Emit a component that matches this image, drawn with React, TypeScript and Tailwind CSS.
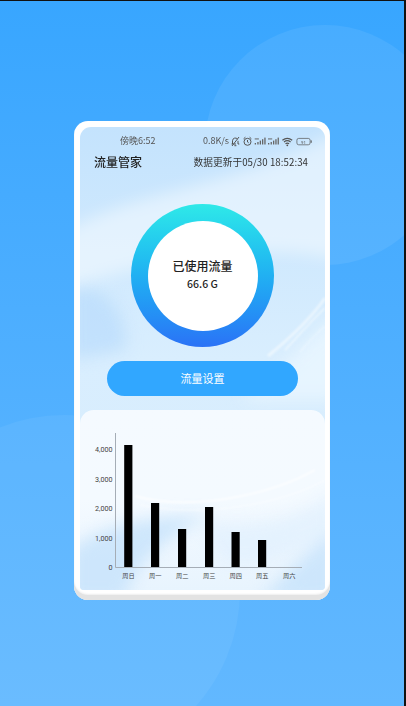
const bars = [
  { x: 124.2, top: 445, label: '周日' },
  { x: 151, top: 503, label: '周一' },
  { x: 178, top: 529, label: '周二' },
  { x: 205, top: 507, label: '周三' },
  { x: 231.5, top: 532, label: '周四' },
  { x: 258, top: 540, label: '周五' },
  { x: 285, top: 567, label: '周六' },
];

const ticks = [
  { y: 567, label: '0' },
  { y: 538, label: '1,000' },
  { y: 508, label: '2,000' },
  { y: 479, label: '3,000' },
  { y: 449, label: '4,000' },
];

const cjk = { fontFamily: "'Noto Sans CJK SC', sans-serif" };

function Signal({ x }: { x: number }) {
  return (
    <g fill="#666" stroke="none">
      <rect x={x} y="2.2" width="4.2" height="1.4" opacity="0.7" />
      <rect x={x} y="7" width="1.3" height="1.5" />
      <rect x={x + 2.6} y="6" width="1.3" height="2.5" />
      <rect x={x + 5} y="4.6" width="1.3" height="3.9" />
      <rect x={x + 7.3} y="3.2" width="1.3" height="5.3" />
      <rect x={x + 9.6} y="1.6" width="1.3" height="6.9" />
    </g>
  );
}

function StatusIcons() {
  return (
    <svg width="84" height="11" viewBox="0 0 84 11" fill="none" stroke="#555" strokeWidth="1">
      {/* bell off */}
      <path d="M2.5 8V4.8a2.8 2.8 0 0 1 5-1.7M8 4.8V8h1.3M1.5 8H6M4.4 9.7h2M2 10l7-9" />
      {/* alarm */}
      <circle cx="17.5" cy="5.8" r="3.5" />
      <path d="M17.5 4v2l1.2.8M13.6 2.8l1.8-1.6M21.4 2.8l-1.8-1.6" />
      <Signal x={24.7} />
      <Signal x={38} />
      {/* wifi */}
      <path d="M52.4 4.2a8 8 0 0 1 9.8 0M54 6a5.4 5.4 0 0 1 6.6 0M55.5 7.7a3 3 0 0 1 3.6 0" strokeWidth="1.2" />
      <circle cx="57.3" cy="9.3" r="0.9" fill="#555" stroke="none" />
      {/* battery */}
      <rect x="66.9" y="2.4" width="13.2" height="6.4" rx="1.8" strokeWidth="0.7" />
      <text x="73.4" y="7.5" textAnchor="middle" fontSize="4.4" fill="#555" stroke="none" fontFamily="Roboto, sans-serif">
        91
      </text>
      <path d="M81.2 4.4v2.4" strokeWidth="1" />
    </svg>
  );
}

function Chart() {
  return (
    <svg className="absolute bottom-0 left-0" width="245" height="180" viewBox="80 410 245 180">
      <path d="M115.5 433V567.5H302" fill="none" stroke="#a5adb6" strokeWidth="1" />
      {bars.map((b) => (
        <g key={b.label}>
          <rect x={b.x} y={b.top} width="8.2" height={567 - b.top} fill="#000" />
          <text x={b.x + 4.2} y="577.5" textAnchor="middle" fontSize="6.2" fill="#444" fontFamily="'Noto Sans CJK SC', sans-serif">
            {b.label}
          </text>
        </g>
      ))}
      {ticks.map((t) => (
        <text key={t.label} x="112.5" y={t.y + 2.5} textAnchor="end" fontSize="7.2" fill="#444" fontFamily="Roboto, sans-serif">
          {t.label}
        </text>
      ))}
    </svg>
  );
}

export default function App() {
  return (
    <div className="relative h-[706px] w-[406px] overflow-hidden bg-[#111] pt-px pr-[2px]">
      <div className="relative h-[705px] w-[404px] overflow-hidden bg-gradient-to-b from-[#38a6ff] to-[#62b8ff] pt-[120px] pl-[74px]">
        <div className="absolute top-[24px] left-[205px] h-[240px] w-[240px] rounded-full bg-white/[0.07]" />
        <div className="absolute top-[414px] left-[-110px] h-[350px] w-[350px] rounded-full bg-white/[0.05]" />

        <div className="relative h-[479px] w-[256px] overflow-hidden rounded-[14px] bg-white pt-[6px] pr-[5px] pl-[6px] shadow-[inset_0_-5px_0_#e3e3e3,inset_0_-6px_2px_#eee]">
          <div className="relative flex h-[463px] flex-col overflow-hidden rounded-t-[11px] rounded-b-[4px] bg-gradient-to-b from-[#c4e3fd] via-[#d9eefe] to-[#d6ecfd]">
            <svg className="absolute inset-0" width="245" height="463" viewBox="80 127 245 463" fill="none">
              <g className="blur-[8px]">
                <path d="M60 235C130 190 230 190 340 130V260C260 240 150 260 60 290Z" fill="#fff" opacity="0.45" />
                <path d="M70 290C100 280 130 310 125 350L70 360Z" fill="#b4d9fb" opacity="0.6" />
                <path d="M240 400C280 370 310 340 340 310V400Z" fill="#eaf6ff" opacity="0.8" />
              </g>
              <g className="blur-[1px]">
                <path d="M268 356C290 338 310 320 325 298" stroke="#fff" strokeWidth="3" opacity="0.5" />
                <path d="M285 350C302 332 314 318 325 308" stroke="#fff" strokeWidth="1.5" opacity="0.6" />
                <path d="M300 352C310 340 318 332 325 326" stroke="#fff" strokeWidth="1" opacity="0.6" />
              </g>
            </svg>

            <div className="relative flex h-[27px] items-center pt-[1px] pl-[40px] text-[9px] text-[#555]" style={cjk}>
              <span className="w-[83px]">傍晚6:52</span>
              <span className="w-[27px]">0.8K/s</span>
              <StatusIcons />
            </div>

            <div className="relative flex h-[16px] items-center justify-between pr-[17px] pl-[14px]" style={cjk}>
              <span className="text-[12px] font-medium text-[#222]">流量管家</span>
              <span className="text-[9.7px] tracking-[0.05px] text-[#333]">数据更新于05/30 18:52:34</span>
            </div>

            <div className="relative mx-auto mt-[34px] flex h-[143px] w-[143px] items-center justify-center rounded-full bg-gradient-to-b from-[#2fe9e8] to-[#2b72f6]">
              <div className="flex h-[110px] w-[110px] flex-col items-center justify-center rounded-full bg-white pb-[2px]" style={cjk}>
                <span className="text-[12px] leading-[18px] font-medium text-[#222]">已使用流量</span>
                <span className="text-[10.5px] leading-[17px] font-medium text-[#222]">66.6 G</span>
              </div>
            </div>

            <div className="relative mx-[27px] mt-[14px] flex h-[35px] items-center justify-center rounded-full bg-[#31a7ff] text-[11px] text-white" style={cjk}>
              流量设置
            </div>

            <div className="relative mt-[14px] h-[180px] overflow-hidden rounded-t-[14px] bg-gradient-to-b from-[#f5faff] via-[#f4faff] to-[#e8f4fe]">
              <svg className="absolute inset-0" width="245" height="180" viewBox="80 410 245 180" fill="none">
                <g className="blur-[8px]">
                  <path d="M70 600V550C100 525 150 515 210 515C160 540 130 570 125 600Z" fill="#c6e2fb" opacity="0.8" />
                  <path d="M260 600C290 570 310 550 335 530V600Z" fill="#c6e2fb" opacity="0.8" />
                  <path d="M200 520C250 530 300 520 335 490V530C290 560 250 570 220 560Z" fill="#dff0fd" opacity="0.7" />
                </g>
                <g className="blur-[1px]">
                  <path d="M135 496C190 512 270 495 315 470" stroke="#fff" strokeWidth="2" opacity="0.8" />
                  <path d="M140 505C200 518 280 505 325 480" stroke="#fff" strokeWidth="1" opacity="0.7" />
                </g>
              </svg>
              <Chart />
            </div>
          </div>
        </div>
      </div>
    </div>
  );
}
